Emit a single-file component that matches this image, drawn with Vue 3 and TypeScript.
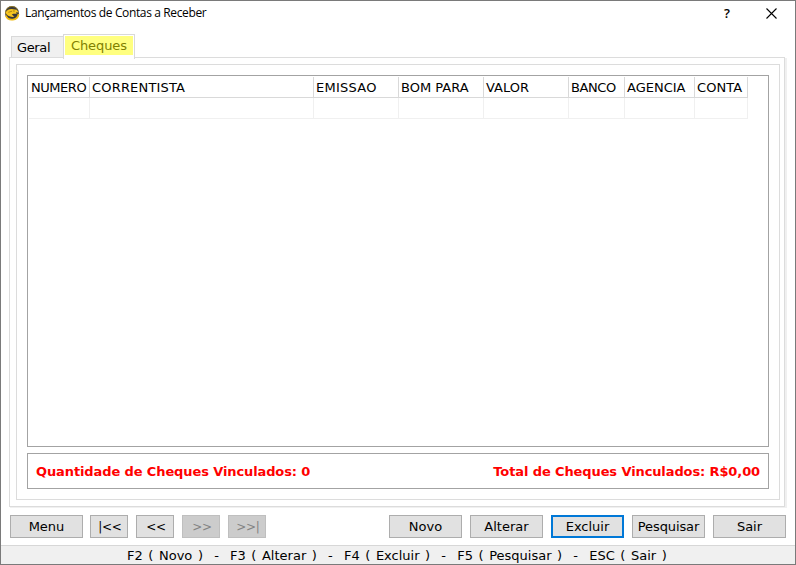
<script setup lang="ts">
interface Column { label: string; kind: string }
interface Action { label: string; kind?: string; disabled?: boolean }

const columns: Column[] = [
  { label: 'NUMERO', kind: 'numero' },
  { label: 'CORRENTISTA', kind: 'correntista' },
  { label: 'EMISSAO', kind: 'emissao' },
  { label: 'BOM PARA', kind: 'bom-para' },
  { label: 'VALOR', kind: 'valor' },
  { label: 'BANCO', kind: 'banco' },
  { label: 'AGENCIA', kind: 'agencia' },
  { label: 'CONTA', kind: 'conta' },
]
const navigation: Action[] = [
  { label: '|<<' },
  { label: '<<' },
  { label: '>>', disabled: true },
  { label: '>>|', disabled: true },
]
const actions: Action[] = [
  { label: 'Novo', kind: 'novo' },
  { label: 'Alterar', kind: 'alterar' },
  { label: 'Excluir', kind: 'focused' },
  { label: 'Pesquisar', kind: 'pesquisar' },
  { label: 'Sair', kind: 'sair' },
]
const shortcuts = 'F2 ( Novo )  -  F3 ( Alterar )  -  F4 ( Excluir )  -  F5 ( Pesquisar )  -  ESC ( Sair )'
</script>

<template>
  <div class="window">
    <header class="titlebar">
      <svg class="logo" viewBox="0 0 16 16">
        <circle cx="8" cy="8" r="7" fill="#39393b" />
        <path d="M1.8 10.6A6.7 6.7 0 0 0 14.6 9" fill="none" stroke="#f0bb10" stroke-width="1.7" />
        <path d="M1.5 9A6.6 6.6 0 0 1 8 1.4A6.6 6.6 0 0 1 13.6 4.6" fill="none" stroke="#a5851c" stroke-width=".7" />
        <path d="M1.6 7.6C3 4.8 6 3.8 8.8 4.2L12.8 4.8 14.9 7.6 12 7.2 12.8 8.8 9.4 8.7 7.8 9.6 10.4 11.8C6.4 12.4 2.6 11 1.6 7.6Z" fill="#f7c51f" />
        <path d="M4.4 7.3L8 6.2M8.8 6h2" stroke="#8a6d16" stroke-width=".7" />
      </svg>
      <span class="title">Lançamentos de Contas a Receber</span>
      <span class="help">?</span>
      <svg class="close" viewBox="0 0 11 11"><path d="M.5 .5L10.5 10.5M10.5 .5L.5 10.5" stroke="#000" stroke-width="1.1" /></svg>
    </header>

    <nav class="tabs">
      <div class="tab">Geral</div>
      <div class="tab active"><span>Cheques</span></div>
    </nav>

    <main class="pane">
      <section class="frame">
        <div class="grid">
          <div class="row head">
            <div v-for="c in columns" :key="c.kind" class="cell" :class="c.kind"><span>{{ c.label }}</span></div>
          </div>
          <div class="row">
            <div v-for="c in columns" :key="c.kind" class="cell" :class="c.kind"></div>
          </div>
        </div>
        <div class="summary">
          <span class="count">Quantidade de Cheques Vinculados: 0</span>
          <span class="total">Total de Cheques Vinculados: R$0,00</span>
        </div>
      </section>
    </main>

    <div class="toolbar">
      <button class="menu">Menu</button>
      <div class="group">
        <button v-for="n in navigation" :key="n.label" class="small" :disabled="n.disabled">{{ n.label }}</button>
      </div>
      <div class="group right">
        <button v-for="a in actions" :key="a.label" :class="a.kind">{{ a.label }}</button>
      </div>
    </div>

    <footer class="status"><span>{{ shortcuts }}</span></footer>
  </div>
</template>

<style>
body { margin: 0; overflow: hidden; }
</style>

<style scoped>
* { box-sizing: border-box; }
.window {
  width: 796px; height: 565px; display: flex; flex-direction: column;
  border: 1px solid #7a7a7a; background: #fff; color: #000;
  font-family: "DejaVu Sans", sans-serif; font-size: 13px; line-height: 16px;
  white-space: nowrap;
}
.titlebar { height: 33px; flex: none; display: flex; align-items: flex-start; padding: 4px 18px 0 3px; }
.logo { width: 16px; height: 16px; }
.title { margin-left: 5px; font: 12px/16px "Open Sans", sans-serif; letter-spacing: -.37px; }
.help { margin-left: auto; font: 600 13px/17px "Open Sans", sans-serif; }
.close { width: 11px; height: 11px; margin: 3px 0 0 36px; }
.tabs { height: 24px; flex: none; display: flex; align-items: flex-end; padding-left: 10px; }
.tab { width: 52px; height: 22px; padding: 3px 0 0 5px; border: 1px solid #d9d9d9; border-right: 0; border-bottom: 0; background: #f0f0f0; letter-spacing: -.35px; }
.tab.active { width: 72px; height: 25px; margin-bottom: -1px; padding: 1px; border-right: 1px solid #d9d9d9; background: #fff; position: relative; z-index: 1; letter-spacing: -.1px; }
.active span { display: block; height: 19px; padding: 2px 0 0 6px; background: #ffff80; color: #808000; }
.pane { width: 776px; height: 450px; flex: none; margin-left: 8px; margin-top: -1px; padding: 6px; border: 1px solid #dcdcdc; box-shadow: 1px 1px 0 #f0f0f0, 2px 1px 0 #f0f0f0; }
.frame { width: 764px; height: 436px; padding: 10px; border: 1px solid #dcdcdc; }
.grid { width: 742px; height: 372px; padding: 1px; border: 1px solid #a3a3a3; }
.row { display: flex; height: 21px; }
.cell { flex: none; padding: 3px 0 0 2px; border-right: 1px solid #f0f0f0; border-bottom: 1px solid #f0f0f0; }
.head .cell { border-color: #d9d9d9; }
.numero { width: 61px; letter-spacing: -.45px; }
.correntista { width: 224px; letter-spacing: .18px; }
.emissao, .bom-para, .valor { width: 85px; }
.emissao { letter-spacing: .25px; }
.banco { width: 56px; letter-spacing: -.4px; }
.agencia { width: 70px; }
.conta { width: 53px; letter-spacing: .1px; }
.summary { width: 742px; height: 36px; margin-top: 6px; padding: 1px 8px 0; display: flex; justify-content: space-between; align-items: center; border: 1px solid #a3a3a3; color: #f00; font-weight: bold; letter-spacing: -.11px; }
.summary span { padding-top: 1px; }
.toolbar { flex: none; display: flex; height: 23px; margin: 8px 9px 0; }
.group { display: flex; gap: 8px; margin-left: 7px; }
.right { margin-left: auto; }
button { width: 73px; height: 23px; padding: 0; border: 1px solid #adadad; border-radius: 0; background: #e1e1e1; color: #000; font: inherit; }
button.small { width: 38px; padding-left: 2px; font-size: 12px; letter-spacing: -.3px; }
button.pesquisar { letter-spacing: -.1px; }
button:disabled { background: #ccc; border-color: #bfbfbf; color: #838383; }
button.focused { border: 2px solid #0078d7; }
.status { flex: 1; margin-top: 7px; border-top: 1px solid #d7d7d7; background: #f0f0f0; padding: 2px 0 0 126px; white-space: pre; word-spacing: 1.45px; }
</style>
